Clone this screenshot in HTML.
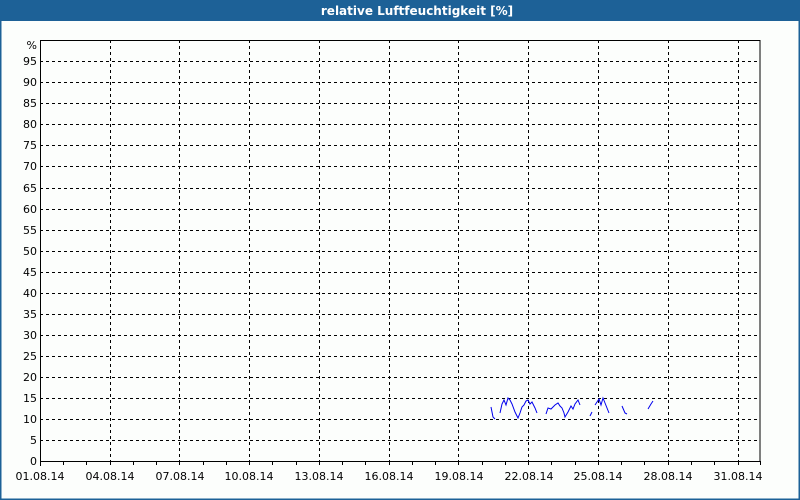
<!DOCTYPE html>
<html><head><style>
html,body{margin:0;padding:0;width:800px;height:500px;overflow:hidden;background:#fcfefc}
svg{display:block}
text{font-family:"DejaVu Sans","Liberation Sans",sans-serif;font-size:11px;fill:#000}
</style></head><body>
<svg width="800" height="500" viewBox="0 0 800 500">
<rect x="0" y="0" width="800" height="500" fill="#fcfefc"/>
<rect x="0" y="0" width="800" height="21" fill="#1d6197"/>
<rect x="0" y="0" width="1.5" height="500" fill="#1d6197"/>
<rect x="798.5" y="0" width="1.5" height="500" fill="#1d6197"/>
<rect x="0" y="498.5" width="800" height="1.5" fill="#1d6197"/>
<text x="417" y="15" text-anchor="middle" style="font-weight:bold;fill:#fff;font-size:12px">relative Luftfeuchtigkeit [%]</text>
<g stroke="#000" stroke-width="1" stroke-dasharray="3,3" fill="none">
<path d="M40 440.5H760M40 419.5H760M40 398.5H760M40 377.5H760M40 356.5H760M40 335.5H760M40 314.5H760M40 293.5H760M40 272.5H760M40 251.5H760M40 230.5H760M40 209.5H760M40 188.5H760M40 166.5H760M40 145.5H760M40 124.5H760M40 103.5H760M40 82.5H760M40 61.5H760"/>
<path d="M110.5 40V461M179.5 40V461M249.5 40V461M319.5 40V461M389.5 40V461M458.5 40V461M528.5 40V461M598.5 40V461M668.5 40V461M738.5 40V461"/>
</g>
<rect x="40.5" y="40.5" width="719.5" height="421" fill="none" stroke="#000" stroke-width="1"/>
<path stroke="#000" stroke-width="1" d="M40.5 461v5M63.5 461v4M86.5 461v4M110.5 461v4M133.5 461v4M156.5 461v4M179.5 461v4M203.5 461v4M226.5 461v4M249.5 461v4M272.5 461v4M296.5 461v4M319.5 461v4M342.5 461v4M365.5 461v4M389.5 461v4M412.5 461v4M435.5 461v4M458.5 461v4M482.5 461v4M505.5 461v4M528.5 461v4M551.5 461v4M575.5 461v4M598.5 461v4M621.5 461v4M644.5 461v4M668.5 461v4M691.5 461v4M714.5 461v4M738.5 461v4M760.5 461v4"/>
<g text-anchor="end">
<text x="37" y="49">%</text>
<text x="37" y="65">95</text><text x="37" y="86">90</text><text x="37" y="107">85</text><text x="37" y="128">80</text>
<text x="37" y="149">75</text><text x="37" y="170">70</text><text x="37" y="192">65</text><text x="37" y="213">60</text>
<text x="37" y="234">55</text><text x="37" y="255">50</text><text x="37" y="276">45</text><text x="37" y="297">40</text>
<text x="37" y="318">35</text><text x="37" y="339">30</text><text x="37" y="360">25</text><text x="37" y="381">20</text>
<text x="37" y="402">15</text><text x="37" y="423">10</text><text x="37" y="444">5</text><text x="37" y="465">0</text>
</g>
<g text-anchor="middle">
<text x="40" y="480">01.08.14</text><text x="110" y="480">04.08.14</text><text x="180" y="480">07.08.14</text>
<text x="249" y="480">10.08.14</text><text x="319" y="480">13.08.14</text><text x="389" y="480">16.08.14</text>
<text x="459" y="480">19.08.14</text><text x="529" y="480">22.08.14</text><text x="598" y="480">25.08.14</text>
<text x="668" y="480">28.08.14</text><text x="738" y="480">31.08.14</text>
</g>
<g stroke="#0000ee" stroke-width="1" fill="none">
<polyline points="491,407 493,417 495,419"/>
<polyline points="500,413 502,404 504,400 506,405 508,398 510,400 512,404 515,412 518,418 520,413 522,407 524,405 526,401 528,400 530,404 532,402 535,408 537,413"/>
<polyline points="546,414 548,408 551,409 555,405 558,403 560,406 562,408 564,413 565,417 568,412 571,406 573,409 575,404 578,400 580,405"/>
<polyline points="590,416 592,412"/>
<polyline points="595,405 597,402 599,399 601,405 603,398 605,403 607,408 609,413"/>
<polyline points="622,406 625,413 627,414"/>
<polyline points="648,409 651,404 653,401"/>
</g>
</svg>
</body></html>
